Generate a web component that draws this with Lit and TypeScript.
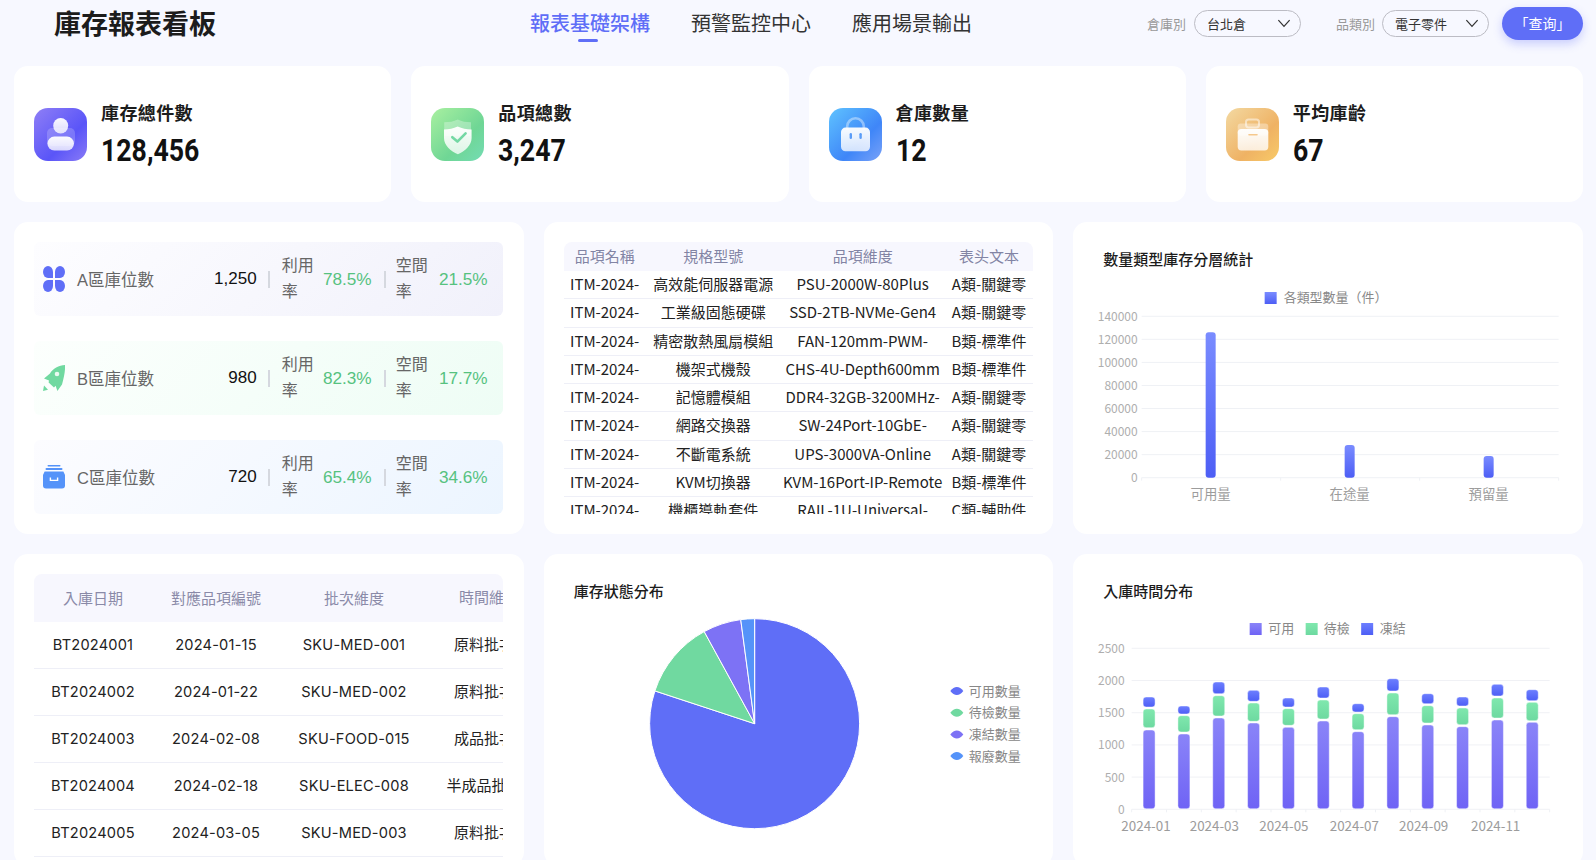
import { LitElement, html, css, svg } from "lit";
import { customElement } from "lit/decorators.js";

const kpis = [
  { label: "庫存總件數", value: "128,456", kind: "user" },
  { label: "品項總數", value: "3,247", kind: "shield" },
  { label: "倉庫數量", value: "12", kind: "bag" },
  { label: "平均庫齡", value: "67", kind: "case" },
];

const zones = [
  { cls: "a", icon: "clover", name: "A區庫位數", val: "1,250", use: "78.5%", free: "21.5%" },
  { cls: "b", icon: "rocket", name: "B區庫位數", val: "980", use: "82.3%", free: "17.7%" },
  { cls: "c", icon: "box", name: "C區庫位數", val: "720", use: "65.4%", free: "34.6%" },
];

const items = [
  ["ITM-2024-001", "高效能伺服器電源", "PSU-2000W-80Plus", "A類-關鍵零件"],
  ["ITM-2024-002", "工業級固態硬碟", "SSD-2TB-NVMe-Gen4", "A類-關鍵零件"],
  ["ITM-2024-003", "精密散熱風扇模組", "FAN-120mm-PWM-Control", "B類-標準件"],
  ["ITM-2024-004", "機架式機殼", "CHS-4U-Depth600mm", "B類-標準件"],
  ["ITM-2024-005", "記憶體模組", "DDR4-32GB-3200MHz-ECC", "A類-關鍵零件"],
  ["ITM-2024-006", "網路交換器", "SW-24Port-10GbE-Managed", "A類-關鍵零件"],
  ["ITM-2024-007", "不斷電系統", "UPS-3000VA-Online", "A類-關鍵零件"],
  ["ITM-2024-008", "KVM切換器", "KVM-16Port-IP-Remote", "B類-標準件"],
  ["ITM-2024-009", "機櫃導軌套件", "RAIL-1U-Universal-Mount", "C類-輔助件"],
];

const batches = [
  ["BT2024001", "2024-01-15", "SKU-MED-001", "原料批次"],
  ["BT2024002", "2024-01-22", "SKU-MED-002", "原料批次"],
  ["BT2024003", "2024-02-08", "SKU-FOOD-015", "成品批次"],
  ["BT2024004", "2024-02-18", "SKU-ELEC-008", "半成品批次"],
  ["BT2024005", "2024-03-05", "SKU-MED-003", "原料批次"],
];

function kpiIcon(kind: string) {
  const bg: Record<string, string[]> = {
    user: ["#8f7ff6", "#5a55f8", "#8a7bf6"],
    shield: ["#a9f0a0", "#6fd695", "#74dcb4"],
    bag: ["#5fc3ff", "#3f86f8", "#7aa2f8"],
    case: ["#f3d9a2", "#efb264", "#f8ca68"],
  };
  const c = bg[kind];
  const inner =
    kind === "user"
      ? svg`<rect x="13" y="20" width="28" height="18" rx="5" fill="#fff" opacity=".2"/>
          <ellipse cx="26.7" cy="17.7" rx="7.5" ry="7.7" fill="url(#wh-user)"/>
          <rect x="13.4" y="28.6" width="26.6" height="14" rx="7" fill="url(#wh-user)"/>`
      : kind === "shield"
        ? svg`<path d="M26.7 11.5C31 13.6 35 14.2 40 14.2V28H13.2V14.2C18.4 14.2 22.4 13.6 26.7 11.5Z" fill="#fff" opacity=".3"/>
          <path d="M26.7 18.6C31 20.6 35.4 21.4 40.6 21.4V30C40.6 37.4 34 43.2 26.9 46.2C19.6 43.2 13 37.4 13 30V21.4C18 21.4 22.4 20.6 26.7 18.6Z" fill="url(#wh-shield)"/>
          <path d="M21.3 29.2L26.4 33.6L34.6 25.4" fill="none" stroke="#74d8a4" stroke-width="2.6" stroke-linecap="round" stroke-linejoin="round"/>`
        : kind === "bag"
          ? svg`<path d="M18.2 22V18.6A8.3 8.3 0 0 1 34.8 18.6V22" fill="none" stroke="#fff" stroke-opacity=".4" stroke-width="2.6"/>
          <rect x="12" y="19.6" width="29" height="23.6" rx="4.5" fill="url(#wh-bag)"/>
          <rect x="20.6" y="25" width="2.4" height="6" rx="1.2" fill="#5a9cf8"/>
          <rect x="30.4" y="25" width="2.4" height="6" rx="1.2" fill="#5a9cf8"/>`
          : svg`<rect x="20" y="11.4" width="13" height="8" rx="2.6" fill="none" stroke="#fff" stroke-opacity=".5" stroke-width="2"/>
          <rect x="11.7" y="15.4" width="30.6" height="12" rx="3" fill="#fff" opacity=".35"/>
          <rect x="11.7" y="21" width="30.6" height="21.4" rx="3.6" fill="url(#wh-case)"/>
          <rect x="22.2" y="26" width="9.6" height="1.6" rx=".8" fill="#f5c88c"/>`;
  return html`<svg class="kpi-icon" viewBox="0 0 53 53" width="53" height="53">
    <defs>
      <linearGradient id=${"bg-" + kind} x1="0" y1="0" x2="1" y2="1">
        <stop offset="0" stop-color=${c[0]}/>
        <stop offset=".62" stop-color=${c[1]}/>
        <stop offset="1" stop-color=${c[2]}/>
      </linearGradient>
      <linearGradient id=${"wh-" + kind} x1="0" y1="0" x2="0" y2="1">
        <stop offset="0" stop-color="#fff" stop-opacity=".96"/>
        <stop offset="1" stop-color="#fff" stop-opacity=".76"/>
      </linearGradient>
    </defs>
    <rect width="53" height="53" rx="14" fill=${"url(#bg-" + kind + ")"}/>
    ${inner}
  </svg>`;
}

function zoneIcon(kind: string) {
  if (kind === "clover")
    return html`<svg class="zone-icon" viewBox="0 0 22 26" width="22" height="26" fill="#5f6ef7">
      <path d="M10 12H5A5 6 0 1 1 10 6Z"/>
      <path d="M12 12H17A5 6 0 1 0 12 6Z"/>
      <path d="M10 14H5A5 6 0 1 0 10 20Z"/>
      <path d="M12 14H17A5 6 0 1 1 12 20Z"/>
    </svg>`;
  if (kind === "rocket")
    return html`<svg class="zone-icon" viewBox="0 0 22 26" width="22" height="26" fill="#70d9a0">
      <path d="M22 0C16 .5 9.5 3.5 7 8.5L1 13.5L6 15.5L5.6 17.4L11 22.4L12.6 20.8L14.4 26L19 19.4C21 12.4 22.4 6 22 0Z"/>
      <path d="M0 26L1 20.5L5 24.8Z"/>
      <circle cx="14" cy="9" r="2.3" fill="#fff" fill-opacity=".85"/>
    </svg>`;
  return html`<svg class="zone-icon" viewBox="0 0 22 24" width="22" height="24" fill="#5593f9">
    <rect x="4.5" y="0" width="13" height="1.4" rx=".7"/>
    <rect x="2.5" y="3" width="17" height="2" rx="1"/>
    <path d="M1.6 6.6H20.4L22 10V20.5A3 3 0 0 1 19 23.5H3A3 3 0 0 1 0 20.5V10Z"/>
    <path d="M7.4 12.4V15.4H14.6V12.4" fill="none" stroke="#fff" stroke-width="1.4"/>
  </svg>`;
}

const chevron = html`<svg class="chev" viewBox="0 0 12 8" width="14" height="9"><path d="M1 1L6 6.6L11 1" fill="none" stroke="#333" stroke-width="1.1"/></svg>`;

function vGrad(id: string, a: string, b: string) {
  return svg`<linearGradient id=${id} x1="0" y1="0" x2="0" y2="1"><stop offset="0" stop-color=${a}/><stop offset="1" stop-color=${b}/></linearGradient>`;
}

function typeChart() {
  const y0 = 477.7;
  const step = 23.06;
  const labels = ["0", "20000", "40000", "60000", "80000", "100000", "120000", "140000"];
  const bars = [
    { cx: 1211, top: 332.3, name: "可用量" },
    { cx: 1350, top: 445, name: "在途量" },
    { cx: 1489, top: 456, name: "預留量" },
  ];
  return html`<svg class="chart" viewBox="1073.33 269 509.67 265">
    <defs>${vGrad("g-blue", "#7a8cff", "#4d5ef5")}</defs>
    <rect x="1265" y="292" width="12" height="12" fill="url(#g-blue)"/>
    <text class="legend" x="1284" y="297.6">各類型數量（件）</text>
    ${labels.map((l, i) => {
      const y = y0 - i * step;
      return svg`<line x1="1142" x2="1559" y1=${y} y2=${y} stroke="#eff1f5"/>
        <text class="axis end" x="1138" y=${y}>${l}</text>`;
    })}
    ${[1142, 1281, 1420, 1559].map((x) => svg`<line x1=${x} x2=${x} y1=${y0} y2=${y0 + 3} stroke="#eff1f5"/>`)}
    ${bars.map(
      (b) => svg`<rect x=${b.cx - 5} y=${b.top} width="10" height=${y0 - b.top} rx="3" fill="url(#g-blue)"/>
        <text class="axis mid cat" x=${b.cx} y="494">${b.name}</text>`,
    )}
  </svg>`;
}

function pieChart() {
  const cx = 754.3;
  const cy = 723.7;
  const r = 105;
  const stops = [0, 288.2, 331.3, 352.4, 360];
  const colors = ["#5f6ef7", "#70d9a0", "#7d72f5", "#5593f9"];
  const names = ["可用數量", "待檢數量", "凍結數量", "報廢數量"];
  const pt = (deg: number) => {
    const a = (deg * Math.PI) / 180;
    return `${cx + r * Math.sin(a)} ${cy - r * Math.cos(a)}`;
  };
  return html`<svg class="chart" viewBox="543.67 601 509.67 265">
    ${colors.map(
      (c, i) => svg`<path d=${`M${cx} ${cy}L${pt(stops[i])}A${r} ${r} 0 ${stops[i + 1] - stops[i] > 180 ? 1 : 0} 1 ${pt(stops[i + 1] - 0.001)}Z`} fill=${c} stroke="#fff" stroke-width="1"/>`,
    )}
    ${names.map((n, i) => {
      const y = 691 + i * 21.7;
      return svg`<path d=${`M950 ${y}Q953 ${y - 4} 956.5 ${y - 4}Q960 ${y - 4} 963 ${y}Q960 ${y + 4} 956.5 ${y + 4}Q953 ${y + 4} 950 ${y}Z`} fill=${colors[i]}/>
        <text class="legend" x="968.4" y=${y}>${n}</text>`;
    })}
  </svg>`;
}

function timeChart() {
  const y0 = 809.3;
  const zy = (z: number) => 550 + z / 3;
  const stacks = [
    [540, 477, 533, 441, 471],
    [552, 497, 546, 468, 492],
    [504, 437, 498, 396, 431],
    [519, 459, 514, 421, 454],
    [532, 476, 526, 444, 471],
    [513, 450, 507, 411, 444],
    [545, 491, 539, 461, 486],
    [500, 429, 494, 386, 423],
    [525, 467, 519, 431, 461],
    [530, 474, 524, 441, 468],
    [510, 444, 504, 403, 438],
    [517, 457, 512, 419, 452],
  ];
  const slot = 418 / 12;
  const xl = ["2024-01", "2024-03", "2024-05", "2024-07", "2024-09", "2024-11"];
  const xc = [1146.3, 1214.7, 1284.3, 1354.7, 1424, 1496];
  const seg = (x: number, a: number, b: number, fill: string) =>
    svg`<rect x=${x - 6} y=${a} width="12" height=${b - a} rx="3" fill=${fill} stroke="#fff" stroke-opacity=".45" stroke-width="1"/>`;
  return html`<svg class="chart" viewBox="1073.33 601 509.67 265">
    <defs>
      ${vGrad("g-pur", "#8a84f8", "#6f63f5")}
      ${vGrad("g-grn", "#80e8ae", "#6dd9a0")}
      ${vGrad("g-blu2", "#6d7fff", "#4d5ef5")}
    </defs>
    <rect x="1250" y="623" width="12" height="12" fill="url(#g-pur)"/>
    <text class="legend" x="1268.5" y="629">可用</text>
    <rect x="1306" y="623" width="12" height="12" fill="url(#g-grn)"/>
    <text class="legend" x="1324" y="629">待檢</text>
    <rect x="1361.5" y="623" width="12" height="12" fill="url(#g-blu2)"/>
    <text class="legend" x="1380" y="629">凍結</text>
    ${["0", "500", "1000", "1500", "2000", "2500"].map((l, i) => {
      const y = y0 - i * 32.2;
      return svg`<line x1="1132" x2="1550" y1=${y} y2=${y} stroke="#f0f1f5"/>
        <text class="axis end" x="1125" y=${y}>${l}</text>`;
    })}
    ${Array.from({ length: 13 }, (_, i) => 1132 + i * slot).map(
      (x) => svg`<line x1=${x} x2=${x} y1=${y0} y2=${y0 + 3} stroke="#eff1f5"/>`,
    )}
    ${stacks.map((s, i) => {
      const x = 1132 + (i + 0.5) * slot;
      return svg`${seg(x, zy(s[0]), y0 - 0.5, "url(#g-pur)")}${seg(x, zy(s[1]), zy(s[2]), "url(#g-grn)")}${seg(x, zy(s[3]), zy(s[4]), "url(#g-blu2)")}`;
    })}
    ${xl.map((l, i) => svg`<text class="axis mid cat" x=${xc[i]} y="826">${l}</text>`)}
  </svg>`;
}

@customElement("app-root")
export class AppRoot extends LitElement {
  static styles = css`
    :host {
      display: block;
      height: 860px;
      overflow: hidden;
      background: #f7f8ff;
      font-family: "Noto Sans CJK TC", sans-serif;
      color: #222;
    }
    .page { padding: 0 13px 0 14px; }
    header { display: flex; align-items: center; height: 46px; margin-bottom: 20px; }
    .title { width: 476px; padding-left: 40px; font-size: 27px; font-weight: 700; color: #1c1c1c; line-height: 50px; }
    nav { display: flex; gap: 41px; font-size: 20px; color: #333; }
    nav a { position: relative; line-height: 28px; }
    nav a.on { color: #5f6ef7; font-weight: 500; }
    nav a.on::after {
      content: ""; position: absolute; left: 48px; bottom: -5px; width: 20px; height: 3px;
      border-radius: 2px; background: #5f6ef7;
    }
    .filters { margin-left: auto; display: flex; align-items: center; font-size: 13px; }
    .flabel { color: #999; margin-right: 7px; }
    .flabel.first { margin-right: 8px; }
    .select {
      width: 107px; height: 27px; box-sizing: border-box; border: 1px solid #bcbcc4; border-radius: 14px;
      display: flex; align-items: center; justify-content: space-between; padding: 0 9px 0 12px;
      margin-right: 35px; color: #333;
    }
    .select.last { margin-right: 13px; }
    .btn {
      width: 81px; height: 33px; border-radius: 17px; background: #5f6ef7; color: #fff; font-size: 14px;
      display: flex; align-items: center; justify-content: center; box-shadow: 0 4px 10px rgba(95, 110, 247, 0.3);
    }
    .kpis { display: grid; grid-template-columns: repeat(4, 1fr); gap: 20px; margin-bottom: 20px; }
    .kpi { height: 136px; background: #fff; border-radius: 14px; display: flex; align-items: center; padding: 0 20px; gap: 14px; }
    .kpi-icon { flex: none; margin-top: 1px; }
    .kpi-label { font-size: 18px; font-weight: 700; color: #1c1c1c; line-height: 26px; letter-spacing: 0.4px; }
    .kpi-val {
      font-family: Roboto, "Liberation Sans", sans-serif;
      font-size: 31px; font-weight: 700; color: #111; line-height: 38px; margin-top: 7px;
      transform: scaleX(0.86); transform-origin: left center;
    }
    .rows { display: grid; grid-template-columns: repeat(3, 1fr); grid-auto-rows: 312px; gap: 20px; }
    .panel { background: #fff; border-radius: 14px; overflow: hidden; }
    .pad { padding: 20px; box-sizing: border-box; }
    .pad.first { padding-right: 21px; }
    .zones { display: flex; flex-direction: column; justify-content: space-between; font-family: "Liberation Sans", "Noto Sans CJK TC", sans-serif; }
    .zone { height: 74px; border-radius: 6px; display: flex; align-items: center; padding: 0 15px 0 9px; color: #666; font-size: 16px; }
    .zone.a { background: linear-gradient(135deg, #fdfdff, #f1f1fb); }
    .zone.b { background: linear-gradient(135deg, #fcfffd, #eefdf5); }
    .zone.c { background: linear-gradient(135deg, #fcfcff, #ecf5ff); }
    .zone-icon { flex: none; margin-right: 12px; }
    .zname { flex: 1; font-size: 16.5px; }
    .zval { color: #111; font-size: 17px; }
    .sep { width: 2px; height: 17px; background: #d5d8df; margin: 0 12px 0 11px; flex: none; }
    .sep.s2 { margin: 0 10px 0 12px; }
    .zl { width: 32px; line-height: 25.6px; flex: none; }
    .zp { width: 58px; text-align: right; color: #56c27f; font-size: 17.2px; flex: none; }
    .zp.p2 { width: 60px; }
    .items { height: 272px; overflow: hidden; font-size: 15px; }
    .irow { display: grid; grid-template-columns: 82px 135px 164px 1fr; height: 28.25px; box-sizing: border-box; border-bottom: 1px solid #eeeff7; text-align: center; color: #222; }
    .irow.h { height: 29px; background: #f7f7fe; border: 0; border-radius: 8px 8px 0 0; color: #8284a4; }
    .irow > div { height: 27px; line-height: 25.5px; overflow: hidden; padding: 0 2px; }
    .irow.h > div { line-height: 27px; }
    .batches { height: 292px; overflow: hidden; font-family: Inter, "Noto Sans CJK TC", sans-serif; font-size: 14.6px; letter-spacing: 0.2px; }
    .brow { display: grid; grid-template-columns: 118px 128px 148px 112px; height: 47px; box-sizing: border-box; border-bottom: 1px solid #eeeff7; text-align: center; align-items: center; color: #222; }
    .brow.h { height: 48px; background: #f7f7fe; border: 0; border-radius: 8px 8px 0 0; color: #8a8aa8; font-size: 15px; letter-spacing: 0; }
    .brow > div { white-space: nowrap; margin-top: -1px; }
    .brow.h > div { margin-top: -2px; }
    .brow.h > div:last-child { padding-left: 10px; }
    .brow > div:last-child { font-size: 15px; letter-spacing: 0; margin-top: -3px; }
    .ctitle { font-size: 15px; font-weight: 500; color: #1c1c1c; line-height: 20px; padding: 27px 30px 0; }
    .chart { display: block; width: 100%; height: 265px; }
    .legend { font-size: 13px; fill: #888; dominant-baseline: central; transform: translateY(-1px); }
    .axis { font-size: 12px; fill: #aeaeae; dominant-baseline: central; transform: translateY(-1px); }
    .cat { font-size: 13.4px; fill: #9c9c9c; }
    .end { text-anchor: end; }
    .mid { text-anchor: middle; }
  `;

  render() {
    return html`<div class="page">
      <header>
        <div class="title">庫存報表看板</div>
        <nav>
          <a class="on">報表基礎架構</a>
          <a>預警監控中心</a>
          <a>應用場景輸出</a>
        </nav>
        <div class="filters">
          <span class="flabel first">倉庫別</span>
          <div class="select"><span>台北倉</span>${chevron}</div>
          <span class="flabel">品類別</span>
          <div class="select last"><span>電子零件</span>${chevron}</div>
          <div class="btn">「查询」</div>
        </div>
      </header>

      <section class="kpis">
        ${kpis.map(
          (k) => html`<div class="kpi">
            ${kpiIcon(k.kind)}
            <div>
              <div class="kpi-label">${k.label}</div>
              <div class="kpi-val">${k.value}</div>
            </div>
          </div>`,
        )}
      </section>

      <section class="rows">
        <div class="panel pad first zones">
          ${zones.map(
            (z) => html`<div class="zone ${z.cls}">
              ${zoneIcon(z.icon)}
              <span class="zname">${z.name}</span>
              <span class="zval">${z.val}</span>
              <i class="sep"></i>
              <span class="zl">利用率</span>
              <span class="zp">${z.use}</span>
              <i class="sep s2"></i>
              <span class="zl">空間率</span>
              <span class="zp p2">${z.free}</span>
            </div>`,
          )}
        </div>

        <div class="panel pad">
          <div class="items">
            <div class="irow h"><div>品項名稱</div><div>規格型號</div><div>品項維度</div><div>表头文本</div></div>
            ${items.map((r) => html`<div class="irow">${r.map((c) => html`<div>${c}</div>`)}</div>`)}
          </div>
        </div>

        <div class="panel">
          <div class="ctitle">數量類型庫存分層統計</div>
          ${typeChart()}
        </div>

        <div class="panel pad first">
          <div class="batches">
            <div class="brow h"><div>入庫日期</div><div>對應品項編號</div><div>批次維度</div><div>時間維度</div></div>
            ${batches.map((r) => html`<div class="brow">${r.map((c) => html`<div>${c}</div>`)}</div>`)}
          </div>
        </div>

        <div class="panel">
          <div class="ctitle">庫存狀態分布</div>
          ${pieChart()}
        </div>

        <div class="panel">
          <div class="ctitle">入庫時間分布</div>
          ${timeChart()}
        </div>
      </section>
    </div>`;
  }
}
